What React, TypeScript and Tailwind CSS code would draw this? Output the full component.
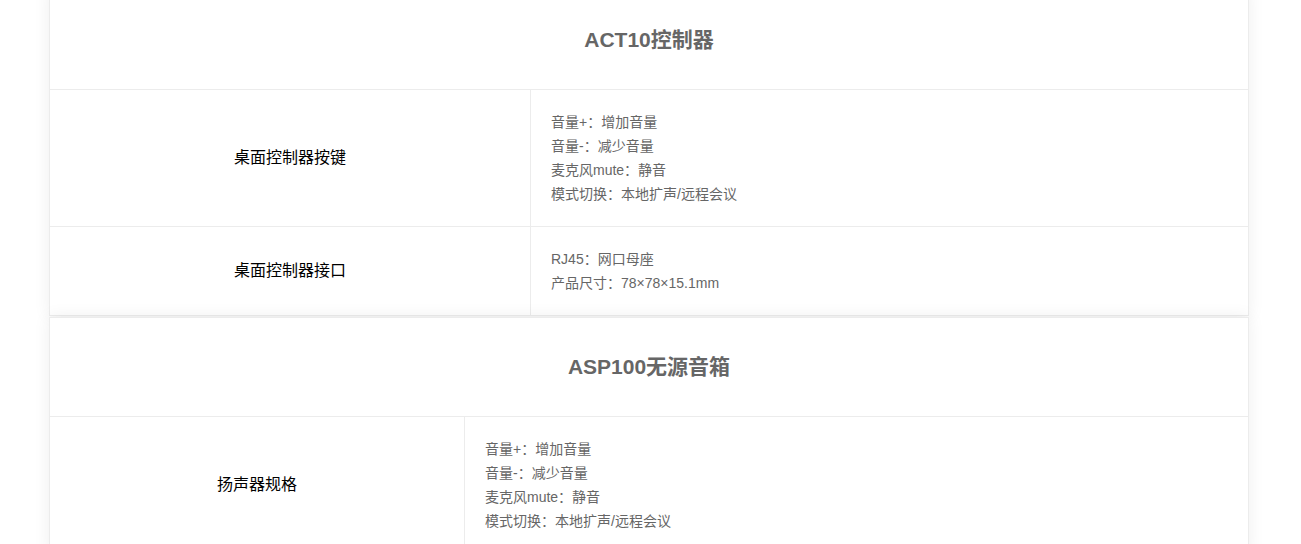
const font = { fontFamily: '"Liberation Sans", "Noto Sans CJK SC", sans-serif' };

type Row = { label: string; lines: string[] };

type Spec = { title: string; labelWidth: string; rows: Row[] };

const controls = ["音量+：增加音量", "音量-：减少音量", "麦克风mute：静音", "模式切换：本地扩声/远程会议"];

const specs: Spec[] = [
  {
    title: "ACT10控制器",
    labelWidth: "w-[481px]",
    rows: [
      { label: "桌面控制器按键", lines: controls },
      { label: "桌面控制器接口", lines: ["RJ45：网口母座", "产品尺寸：78×78×15.1mm"] },
    ],
  },
  {
    title: "ASP100无源音箱",
    labelWidth: "w-[415px]",
    rows: [{ label: "扬声器规格", lines: controls }],
  },
];

function SpecCard({ spec, first }: { spec: Spec; first: boolean }) {
  return (
    <section
      className={`relative border border-[#ececec] bg-white shadow-[0_0_16px_rgba(0,0,0,0.07)] ${first ? "-mt-[10px]" : "mt-px"}`}
    >
      <div className="flex h-[99px] items-center justify-center border-b border-[#ececec]">
        <h2 className="text-[21px] font-bold text-[#666]">{spec.title}</h2>
      </div>

      {spec.rows.map((row, i) => (
        <div
          key={row.label}
          className={`flex ${i < spec.rows.length - 1 ? "border-b border-[#ececec]" : ""}`}
        >
          <div className={`${spec.labelWidth} flex shrink-0 items-center justify-center border-r border-[#ececec] text-[16px] text-black`}>
            {row.label}
          </div>
          <div className="flex-1 px-5 py-5 text-[14px] leading-6 text-[#666]">
            {row.lines.map((line) => (
              <p key={line}>{line}</p>
            ))}
          </div>
        </div>
      ))}
    </section>
  );
}

export default function App() {
  return (
    <div className="h-[544px] w-full overflow-hidden bg-white" style={font}>
      <div className="ml-[49px] w-[1200px]">
        {specs.map((spec, i) => (
          <SpecCard key={spec.title} spec={spec} first={i === 0} />
        ))}
      </div>
    </div>
  );
}
